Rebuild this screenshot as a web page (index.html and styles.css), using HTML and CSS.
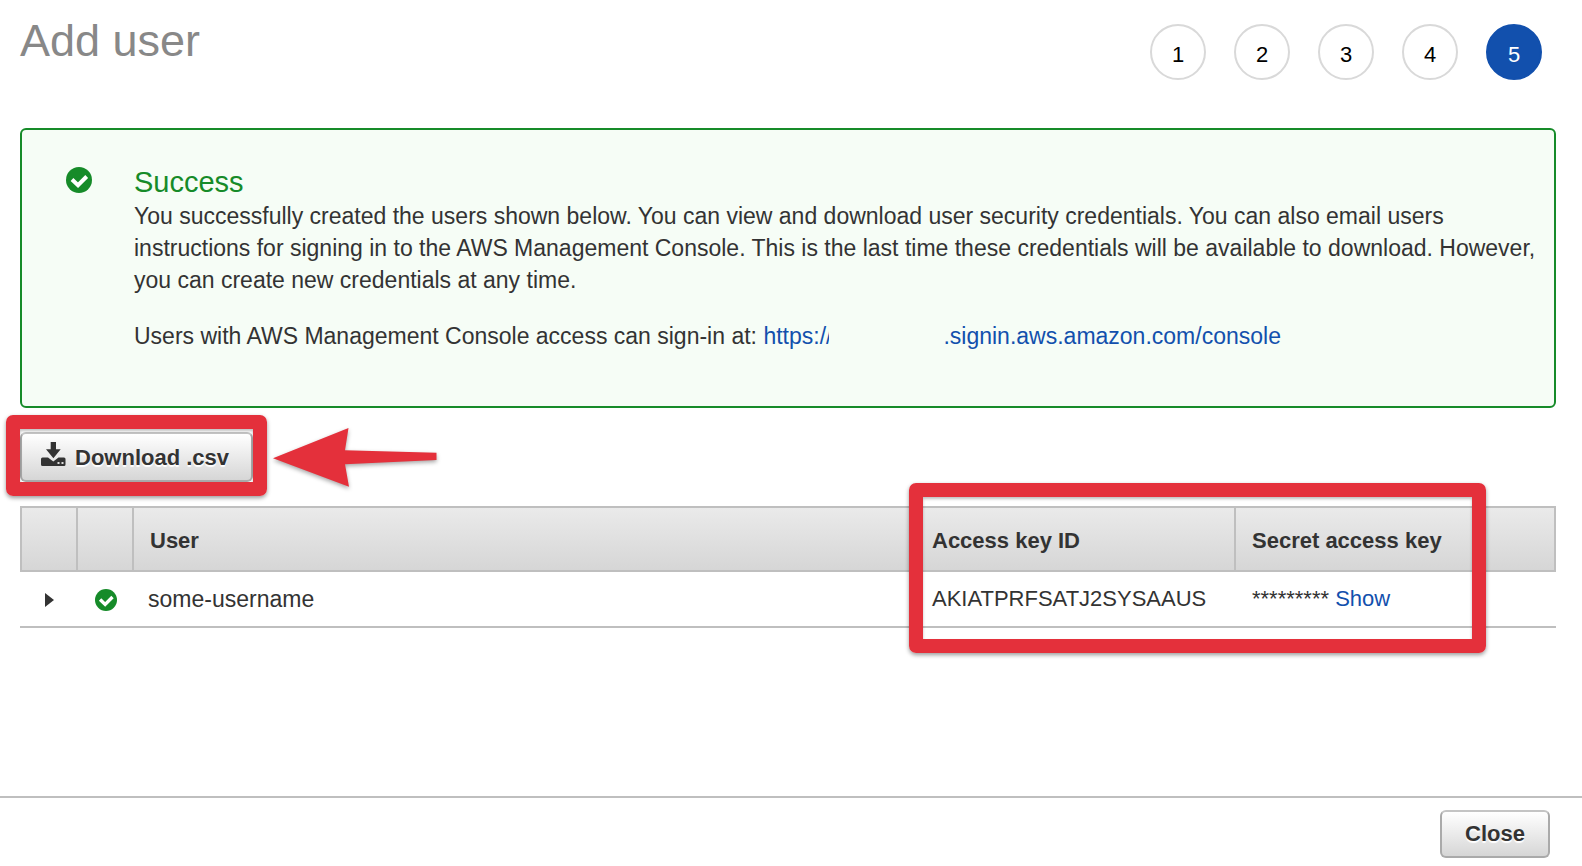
FILE: index.html
```
<!DOCTYPE html>
<html lang="en">
<head>
<meta charset="utf-8">
<title>Add user</title>
<meta name="viewport" content="width=device-width, initial-scale=1">
<link rel="stylesheet" href="styles.css">
</head>
<body>
<svg class="defs" aria-hidden="true">
  <symbol id="check" viewBox="0 0 26 26">
    <circle cx="13" cy="13" r="13" fill="#168b29"/>
    <path d="M6 12.500l6 5.700 8.700-8.700" fill="none" stroke="#fff" stroke-width="4"/>
  </symbol>
</svg>
<main class="content">
  <header class="page-header">
    <h1 class="title">Add user</h1>
    <ol class="steps">
      <li class="step">1</li>
      <li class="step">2</li>
      <li class="step">3</li>
      <li class="step">4</li>
      <li class="step step-current" aria-current="step">5</li>
    </ol>
  </header>

  <section class="alert">
    <svg class="alert-icon" aria-hidden="true"><use href="#check"/></svg>
    <div class="alert-body">
      <h2 class="alert-title">Success</h2>
      <p class="alert-text">You successfully created the users shown below. You can view and download user security credentials. You can also email users instructions for signing in to the AWS Management Console. This is the last time these credentials will be available to download. However, you can create new credentials at any time.</p>
      <p class="alert-text">Users with AWS Management Console access can sign-in at: <a class="link" href="#">https://<span class="redacted"></span>.signin.aws.amazon.com/console</a></p>
    </div>
  </section>

  <div class="toolbar">
    <div class="download">
      <button class="button" type="button">
        <svg class="download-icon" viewBox="0 0 25 25" aria-hidden="true">
          <path d="M9.700 0h5.300v7.300h4.700l-7.300 9L5 7.300h4.700z" fill="#333"/>
          <path d="M1.500 15.500h5.500l5.300 4 5.200-4h5.500q1.500 0 1.500 1.500v5.500q0 1.500-1.500 1.500h-21.500q-1.500 0-1.500-1.500v-5.500q0-1.500 1.500-1.500z" fill="#333"/>
          <path d="M16.500 20h2v2h-2zM20.500 20h2v2h-2z" fill="#ddd"/>
        </svg>
        <span>Download .csv</span>
      </button>
      <div class="marker marker-download"></div>
      <svg class="arrow" viewBox="0 0 164 60" aria-hidden="true">
        <path d="M0 30.300L75.500 0 72 22.300l91.500 2.400V32L72 36.300l4 22.400z" fill="#e4303b"/>
      </svg>
    </div>
  </div>

  <div class="table-area">
    <table class="users">
      <thead>
        <tr>
          <th class="col-icon" aria-label="Expand"></th>
          <th class="col-icon" aria-label="Status"></th>
          <th class="col-user">User</th>
          <th class="col-key">Access key ID</th>
          <th class="col-secret">Secret access key</th>
        </tr>
      </thead>
      <tbody>
        <tr>
          <td><button class="expand" type="button" aria-label="Expand row"><svg class="caret" viewBox="0 0 9 14"><path d="M0 0l9 7-9 7z" fill="#333"/></svg></button></td>
          <td><svg class="row-check" aria-hidden="true"><use href="#check"/></svg></td>
          <td class="name">some-username</td>
          <td>AKIATPRFSATJ2SYSAAUS</td>
          <td>********* <a class="link" href="#">Show</a></td>
        </tr>
      </tbody>
    </table>
    <div class="marker marker-keys"></div>
  </div>
</main>
<footer class="footer">
  <button class="button" type="button">Close</button>
</footer>
</body>
</html>
```
FILE: styles.css
```
* { box-sizing: border-box; }

body {
  margin: 0;
  min-height: 100vh;
  display: flex;
  flex-direction: column;
  background: #fff;
  color: #333;
  font: 22px/32px "Liberation Sans", Arial, sans-serif;
}

.defs { position: absolute; width: 0; height: 0; }

.content { flex: 1; padding: 16px 26px 0 20px; }

.page-header {
  display: flex;
  justify-content: space-between;
  height: 112px;
}

.title {
  margin: 0;
  color: #888;
  font-size: 45px;
  font-weight: 400;
  line-height: 50px;
}

.steps {
  display: flex;
  gap: 28px;
  margin: 8px 14px 0 0;
  padding: 0;
  list-style: none;
}

.step {
  width: 56px;
  height: 56px;
  padding-top: 2px;
  border: 2px solid #d9d9d9;
  border-radius: 50%;
  color: #000;
  line-height: 54px;
  text-align: center;
}

.step-current { border-color: #1250ad; background: #1250ad; color: #fff; }

.alert {
  display: flex;
  gap: 42px;
  padding: 36px 16px 54px 44px;
  border: 2px solid #168b29;
  border-radius: 6px;
  background: #f6fdf6;
}

.alert-icon { flex: none; width: 26px; height: 28px; }

.alert-title {
  margin: 0 0 2px;
  color: #168b29;
  font-size: 29px;
  font-weight: 400;
  line-height: 32px;
}

.alert-text { margin: 0 0 24px; font-size: 23px; }
.alert-text:last-child { margin-bottom: 0; }

.link { color: #1250ad; text-decoration: none; }

/* Covers the account part of the URL, including the tip of the last slash. */
.redacted {
  display: inline-block;
  position: relative;
  width: 114px;
  height: 32px;
  margin-left: -3px;
  background: #f6fdf6;
  vertical-align: top;
}

.toolbar { padding: 24px 0; }

.download { position: relative; width: max-content; }

.button {
  display: flex;
  align-items: center;
  gap: 9px;
  height: 50px;
  padding: 2px 22px 0 19px;
  border: 2px solid #aaa;
  border-top-color: #c4c4c4;
  border-radius: 6px;
  background: linear-gradient(#fff, #d6d6d6);
  color: #333;
  font: bold 22px/32px "Liberation Sans", Arial, sans-serif;
  text-shadow: 0 2px 1px #fff;
}

.download-icon { width: 25px; height: 25px; margin-bottom: 8px; }

.marker {
  position: absolute;
  border: 14px solid #e4303b;
  border-radius: 7px;
  box-shadow: 0 2px 4px rgba(0, 0, 0, .4), inset 0 2px 3px rgba(0, 0, 0, .25);
  pointer-events: none;
}

.marker-download { inset: -17px -14px -14px; }

.arrow {
  position: absolute;
  left: 100%;
  top: -4px;
  width: 164px;
  height: 60px;
  margin-left: 20px;
  overflow: visible;
  filter: drop-shadow(0 2px 2px rgba(0, 0, 0, .35));
}

.table-area { position: relative; }

.users { width: 100%; table-layout: fixed; border-spacing: 0; }

.users th {
  height: 66px;
  padding: 4px 16px 0;
  border: solid #bfbfbf;
  border-width: 2px 0 2px 2px;
  background: linear-gradient(#eaeaea, #d6d6d6);
  font-weight: bold;
  text-align: left;
}

.users th:last-child { border-right-width: 2px; }
.users .col-icon { width: 56px; }
.users .col-key { width: 320px; }
.users .col-secret { width: 322px; }

.users td {
  height: 56px;
  padding: 0 18px;
  border-bottom: 2px solid #bfbfbf;
}

.users td.name { padding-left: 16px; font-size: 23px; }

.expand {
  display: block;
  padding: 2px 7px 0;
  border: 0;
  background: none;
}

.caret { display: block; width: 9px; height: 14px; }

.row-check { display: block; width: 22px; height: 22px; margin: 2px 0 0 1px; }

.marker-keys { top: -23px; right: 70px; bottom: -25px; width: 577px; }

.footer {
  display: flex;
  justify-content: flex-end;
  height: 70px;
  padding: 12px 32px 0 20px;
  border-top: 2px solid #bfbfbf;
}

.footer .button { height: 48px; padding: 0 23px; }
```
